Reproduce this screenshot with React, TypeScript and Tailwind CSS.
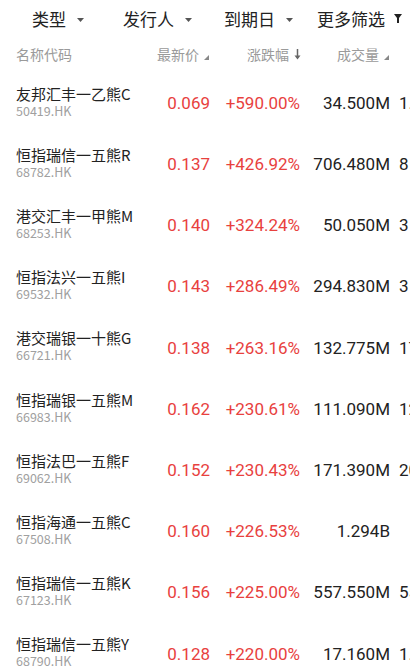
import React from 'react';

type Row = {
  name: string;
  code: string;
  price: string;
  change: string;
  volume: string;
  extra: string;
};

const rows: Row[] = [
  { name: '友邦汇丰一乙熊C', code: '50419.HK', price: '0.069', change: '+590.00%', volume: '34.500M', extra: '1.7' },
  { name: '恒指瑞信一五熊R', code: '68782.HK', price: '0.137', change: '+426.92%', volume: '706.480M', extra: '8' },
  { name: '港交汇丰一甲熊M', code: '68253.HK', price: '0.140', change: '+324.24%', volume: '50.050M', extra: '3' },
  { name: '恒指法兴一五熊I', code: '69532.HK', price: '0.143', change: '+286.49%', volume: '294.830M', extra: '3' },
  { name: '港交瑞银一十熊G', code: '66721.HK', price: '0.138', change: '+263.16%', volume: '132.775M', extra: '17' },
  { name: '恒指瑞银一五熊M', code: '66983.HK', price: '0.162', change: '+230.61%', volume: '111.090M', extra: '12' },
  { name: '恒指法巴一五熊F', code: '69062.HK', price: '0.152', change: '+230.43%', volume: '171.390M', extra: '20' },
  { name: '恒指海通一五熊C', code: '67508.HK', price: '0.160', change: '+226.53%', volume: '1.294B', extra: '' },
  { name: '恒指瑞信一五熊K', code: '67123.HK', price: '0.156', change: '+225.00%', volume: '557.550M', extra: '55' },
  { name: '恒指瑞信一五熊Y', code: '68790.HK', price: '0.128', change: '+220.00%', volume: '17.160M', extra: '1.7' },
];

const cjk = "font-['Noto_Sans_CJK_SC','Noto_Sans',sans-serif]";
const num = "font-['Roboto','Noto_Sans',sans-serif]";

function Caret() {
  return (
    <svg width="7" height="4" viewBox="0 0 7 4" className="ml-[11px] mt-[2px]">
      <path d="M0 0h7L3.5 4z" fill="#555" />
    </svg>
  );
}

function Funnel() {
  return (
    <svg width="8" height="9" viewBox="0 0 8 9" className="ml-[9px]">
      <path d="M0 0h8L5 4v5H3V4z" fill="#222" />
    </svg>
  );
}

function CornerSort() {
  return (
    <svg width="5" height="5" viewBox="0 0 5 5" className="ml-[5px] mt-[6px]">
      <path d="M5 0v5H0z" fill="#888" />
    </svg>
  );
}

function DownArrow() {
  return (
    <svg width="7" height="11" viewBox="0 0 7 11" className="ml-[5px] mt-[1px]">
      <path d="M3.5 0v9" stroke="#666" strokeWidth="1.5" />
      <path d="M0.5 6.5L3.5 10.5L6.5 6.5z" fill="#666" />
    </svg>
  );
}

export default function App() {
  return (
    <div className={`w-[410px] h-[671px] overflow-hidden bg-white ${cjk}`}>
      <div className="flex h-[37px] items-center text-[17px] text-[#222]">
        <div className="flex items-center pl-[32px] w-[123px]">
          <span>类型</span>
          <Caret />
        </div>
        <div className="flex items-center w-[101px]">
          <span>发行人</span>
          <Caret />
        </div>
        <div className="flex items-center w-[93px]">
          <span>到期日</span>
          <Caret />
        </div>
        <div className="flex items-center">
          <span>更多筛选</span>
          <Funnel />
        </div>
      </div>

      <div className="flex h-[34px] items-center text-[14px] text-[#9a9a9a]">
        <div className="pl-[16px] w-[157px]">名称代码</div>
        <div className="flex items-center w-[90px]">
          <span>最新价</span>
          <CornerSort />
        </div>
        <div className="flex items-center w-[90px]">
          <span>涨跌幅</span>
          <DownArrow />
        </div>
        <div className="flex items-center">
          <span>成交量</span>
          <CornerSort />
        </div>
      </div>

      <div className="flex flex-col">
        {rows.map((r) => (
          <div key={r.code} className="flex h-[61.2px] items-center whitespace-nowrap">
            <div className="pl-[16px] w-[150px] shrink-0 flex flex-col">
              <span className="text-[15px] leading-[18px] text-[#222]">{r.name}</span>
              <span className="text-[12.5px] leading-[16px] text-[#a0a0a0]">{r.code}</span>
            </div>
            <div className={`${num} w-[60px] shrink-0 text-right text-[17px] text-[#e8413e] mt-[4px]`}>{r.price}</div>
            <div className={`${num} w-[90px] shrink-0 text-right text-[17px] text-[#e8413e] mt-[4px]`}>{r.change}</div>
            <div className={`${num} w-[90px] shrink-0 text-right text-[17px] text-[#222] mt-[4px]`}>{r.volume}</div>
            <div className={`${num} w-[40px] shrink-0 pl-[9px] text-left text-[17px] text-[#222] mt-[4px]`}>{r.extra}</div>
          </div>
        ))}
      </div>
    </div>
  );
}
